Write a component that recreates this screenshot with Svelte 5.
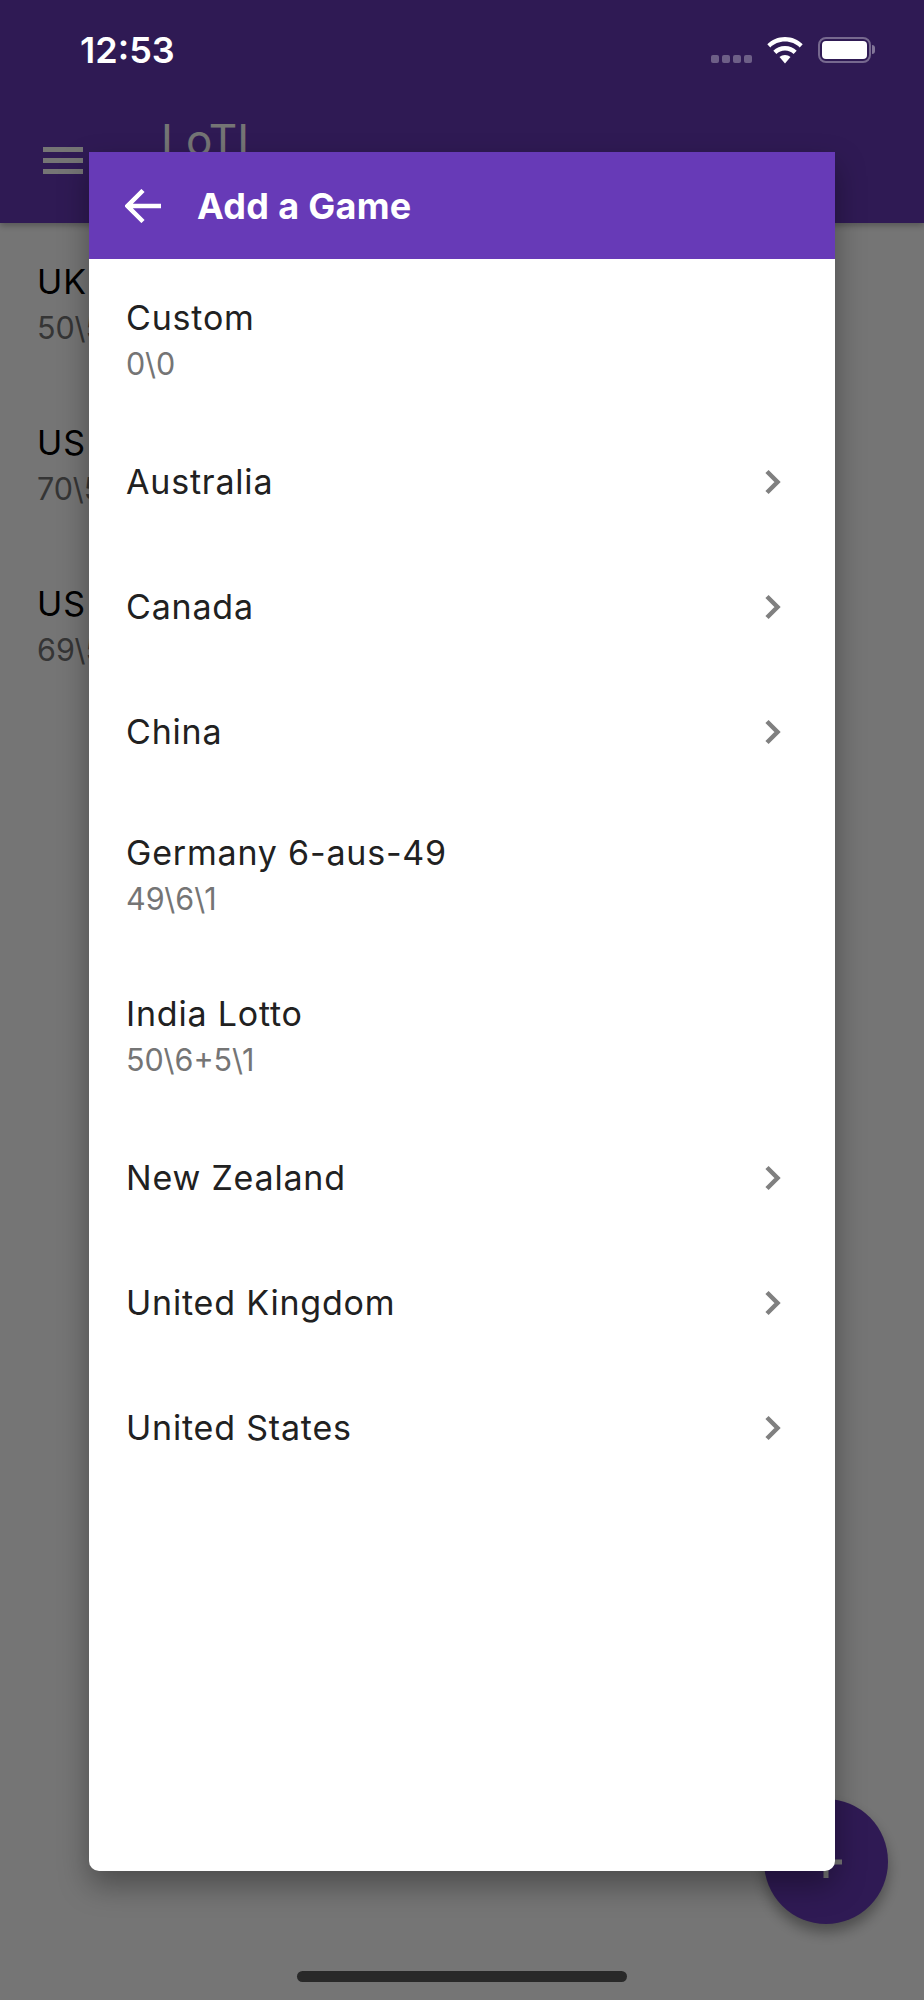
<script>
    const behind = [
        { title: 'UK', sub: '50\\5' },
        { title: 'US', sub: '70\\5' },
        { title: 'US', sub: '69\\5' }
    ];

    const games = [
        { name: 'Custom', sub: '0\\0' },
        { name: 'Australia', more: true },
        { name: 'Canada', more: true },
        { name: 'China', more: true },
        { name: 'Germany 6-aus-49', sub: '49\\6\\1' },
        { name: 'India Lotto', sub: '50\\6+5\\1' },
        { name: 'New Zealand', more: true },
        { name: 'United Kingdom', more: true },
        { name: 'United States', more: true }
    ];
</script>

<main class="page">
    <header class="appbar">
        <div class="toolbar">
            <div class="burger"><span></span><span></span><span></span></div>
            <span class="app-title">LoTI</span>
        </div>
    </header>

    <section class="lotteries">
        {#each behind as item}
            <div class="lottery">
                <div class="lottery-title">{item.title}</div>
                <div class="lottery-sub">{item.sub}</div>
            </div>
        {/each}
    </section>

    <button class="fab" type="button" aria-label="Add">
        <svg width="32" height="32" viewBox="0 0 32 32"><path d="M16 0v32M0 16h32" stroke="#fff" stroke-width="5" /></svg>
    </button>

    <div class="scrim"></div>

    <div class="statusbar">
        <span class="time">12:53</span>
        <div class="status-icons">
            <div class="signal"><i></i><i></i><i></i><i></i></div>
            <svg class="wifi" width="36" height="27" viewBox="0 0 36 27">
                <path d="M18 0C11 0 4.800 2.800 0.300 7.200L3.300 10.400C7 6.800 12.200 4.500 18 4.500S29 6.800 32.700 10.400L35.700 7.200C31.200 2.800 25 0 18 0Z" fill="#fff" />
                <path d="M18 9C13.400 9 9.300 10.800 6.300 13.700L9.400 16.900C11.600 14.800 14.600 13.500 18 13.500S24.400 14.800 26.600 16.900L29.700 13.700C26.700 10.800 22.600 9 18 9Z" fill="#fff" />
                <path d="M18 18C15.900 18 14 18.800 12.500 20.100L18 26.500L23.500 20.100C22 18.800 20.100 18 18 18Z" fill="#fff" />
            </svg>
            <div class="battery"><div class="battery-fill"></div></div>
        </div>
    </div>

    <div class="dialog">
        <div class="dialog-head">
            <svg class="back" width="36" height="34" viewBox="0 0 36 34">
                <path d="M36 17H3M18 1.500L2.500 17L18 32.500" fill="none" stroke="#fff" stroke-width="4.500" />
            </svg>
            <span class="dialog-title">Add a Game</span>
        </div>
        <div class="games">
            {#each games as game}
                <div class="game" class:two-line={game.sub}>
                    <div class="game-text">
                        <div class="game-name">{game.name}</div>
                        {#if game.sub}
                            <div class="game-sub">{game.sub}</div>
                        {/if}
                    </div>
                    {#if game.more}
                        <svg class="chevron" width="18" height="26" viewBox="0 0 18 26">
                            <path d="M3 2.500L13.500 13L3 23.500" fill="none" stroke="#808080" stroke-width="4.500" />
                        </svg>
                    {/if}
                </div>
            {/each}
        </div>
    </div>

    <div class="home-indicator"></div>
</main>

<style>
    :global(body) {
        margin: 0;
        background: #fff;
    }

    .page {
        position: relative;
        width: 924px;
        height: 2000px;
        overflow: hidden;
        background: #fff;
        font-family: Inter, "Liberation Sans", sans-serif;
    }

    .appbar {
        height: 223px;
        background: #673ab7;
        box-shadow: 0 3px 6px rgba(0, 0, 0, 0.25);
        display: flex;
        flex-direction: column;
        justify-content: flex-end;
    }

    .toolbar {
        height: 115px;
        display: flex;
        align-items: flex-start;
        padding-left: 43px;
        color: #fff;
    }

    .burger {
        width: 40px;
        margin-top: 39px;
        margin-right: 78px;
        display: grid;
        gap: 6px;
    }

    .burger span {
        display: block;
        height: 5px;
        background: #fff;
    }

    .app-title {
        font-size: 44px;
        line-height: 48px;
        margin-top: 8px;
    }

    .lotteries {
        padding-left: 37px;
    }

    .lottery {
        height: 161px;
        box-sizing: border-box;
        padding-top: 5px;
        display: flex;
        flex-direction: column;
        justify-content: center;
    }

    .lottery-title {
        font-size: 34px;
        line-height: 44px;
        letter-spacing: 0.9px;
        color: #000;
    }

    .lottery-sub {
        font-size: 30.5px;
        line-height: 48px;
        color: #757575;
    }

    .fab {
        position: absolute;
        left: 764px;
        top: 1799px;
        width: 124px;
        height: 125px;
        border: none;
        border-radius: 50%;
        padding: 0;
        background: #673ab7;
        display: flex;
        align-items: center;
        justify-content: center;
        box-shadow: 0 8px 14px rgba(0, 0, 0, 0.35);
    }

    .scrim {
        position: absolute;
        inset: 0;
        background: rgba(0, 0, 0, 0.54);
    }

    .statusbar {
        position: absolute;
        top: 0;
        left: 0;
        right: 0;
        height: 100px;
        color: #fff;
    }

    .time {
        position: absolute;
        left: 80px;
        top: 29px;
        font-size: 36px;
        line-height: 42px;
        font-weight: 600;
    }

    .status-icons {
        position: absolute;
        right: 53px;
        top: 37px;
        display: flex;
        align-items: flex-start;
    }

    .signal {
        display: flex;
        gap: 3px;
        margin-top: 18px;
        margin-right: 15px;
    }

    .signal i {
        width: 8px;
        height: 8px;
        border-radius: 2px;
        background: rgba(255, 255, 255, 0.3);
    }

    .wifi {
        margin-right: 15px;
    }

    .battery {
        position: relative;
        width: 53px;
        height: 26px;
        box-sizing: border-box;
        border: 2px solid rgba(255, 255, 255, 0.35);
        border-radius: 8px;
        padding: 2px;
    }

    .battery::after {
        content: '';
        position: absolute;
        right: -6px;
        top: 6px;
        width: 3px;
        height: 9px;
        background: rgba(255, 255, 255, 0.4);
        border-radius: 0 3px 3px 0;
    }

    .battery-fill {
        height: 100%;
        background: #fff;
        border-radius: 4px;
    }

    .dialog {
        position: absolute;
        left: 89px;
        top: 152px;
        width: 746px;
        height: 1719px;
        background: #fff;
        border-radius: 0 0 10px 10px;
        box-shadow: 0 14px 30px rgba(0, 0, 0, 0.35);
        overflow: hidden;
    }

    .dialog-head {
        height: 107px;
        background: #673ab7;
        display: flex;
        align-items: center;
        padding-left: 36px;
        color: #fff;
    }

    .back {
        margin-right: 36px;
    }

    .dialog-title {
        font-size: 36px;
        letter-spacing: 0.3px;
        font-weight: 700;
    }

    .game {
        height: 124.7px;
        box-sizing: border-box;
        padding: 0 53px 0 37px;
        display: flex;
        align-items: center;
        justify-content: space-between;
    }

    .game.two-line {
        height: 161px;
        padding-top: 5px;
    }

    .game-name {
        font-size: 34px;
        line-height: 44px;
        letter-spacing: 0.8px;
        color: #212121;
    }

    .game-sub {
        font-size: 30.5px;
        line-height: 48px;
        color: #757575;
    }

    .home-indicator {
        position: absolute;
        left: 297px;
        top: 1971px;
        width: 330px;
        height: 11px;
        border-radius: 6px;
        background: #292929;
    }
</style>
